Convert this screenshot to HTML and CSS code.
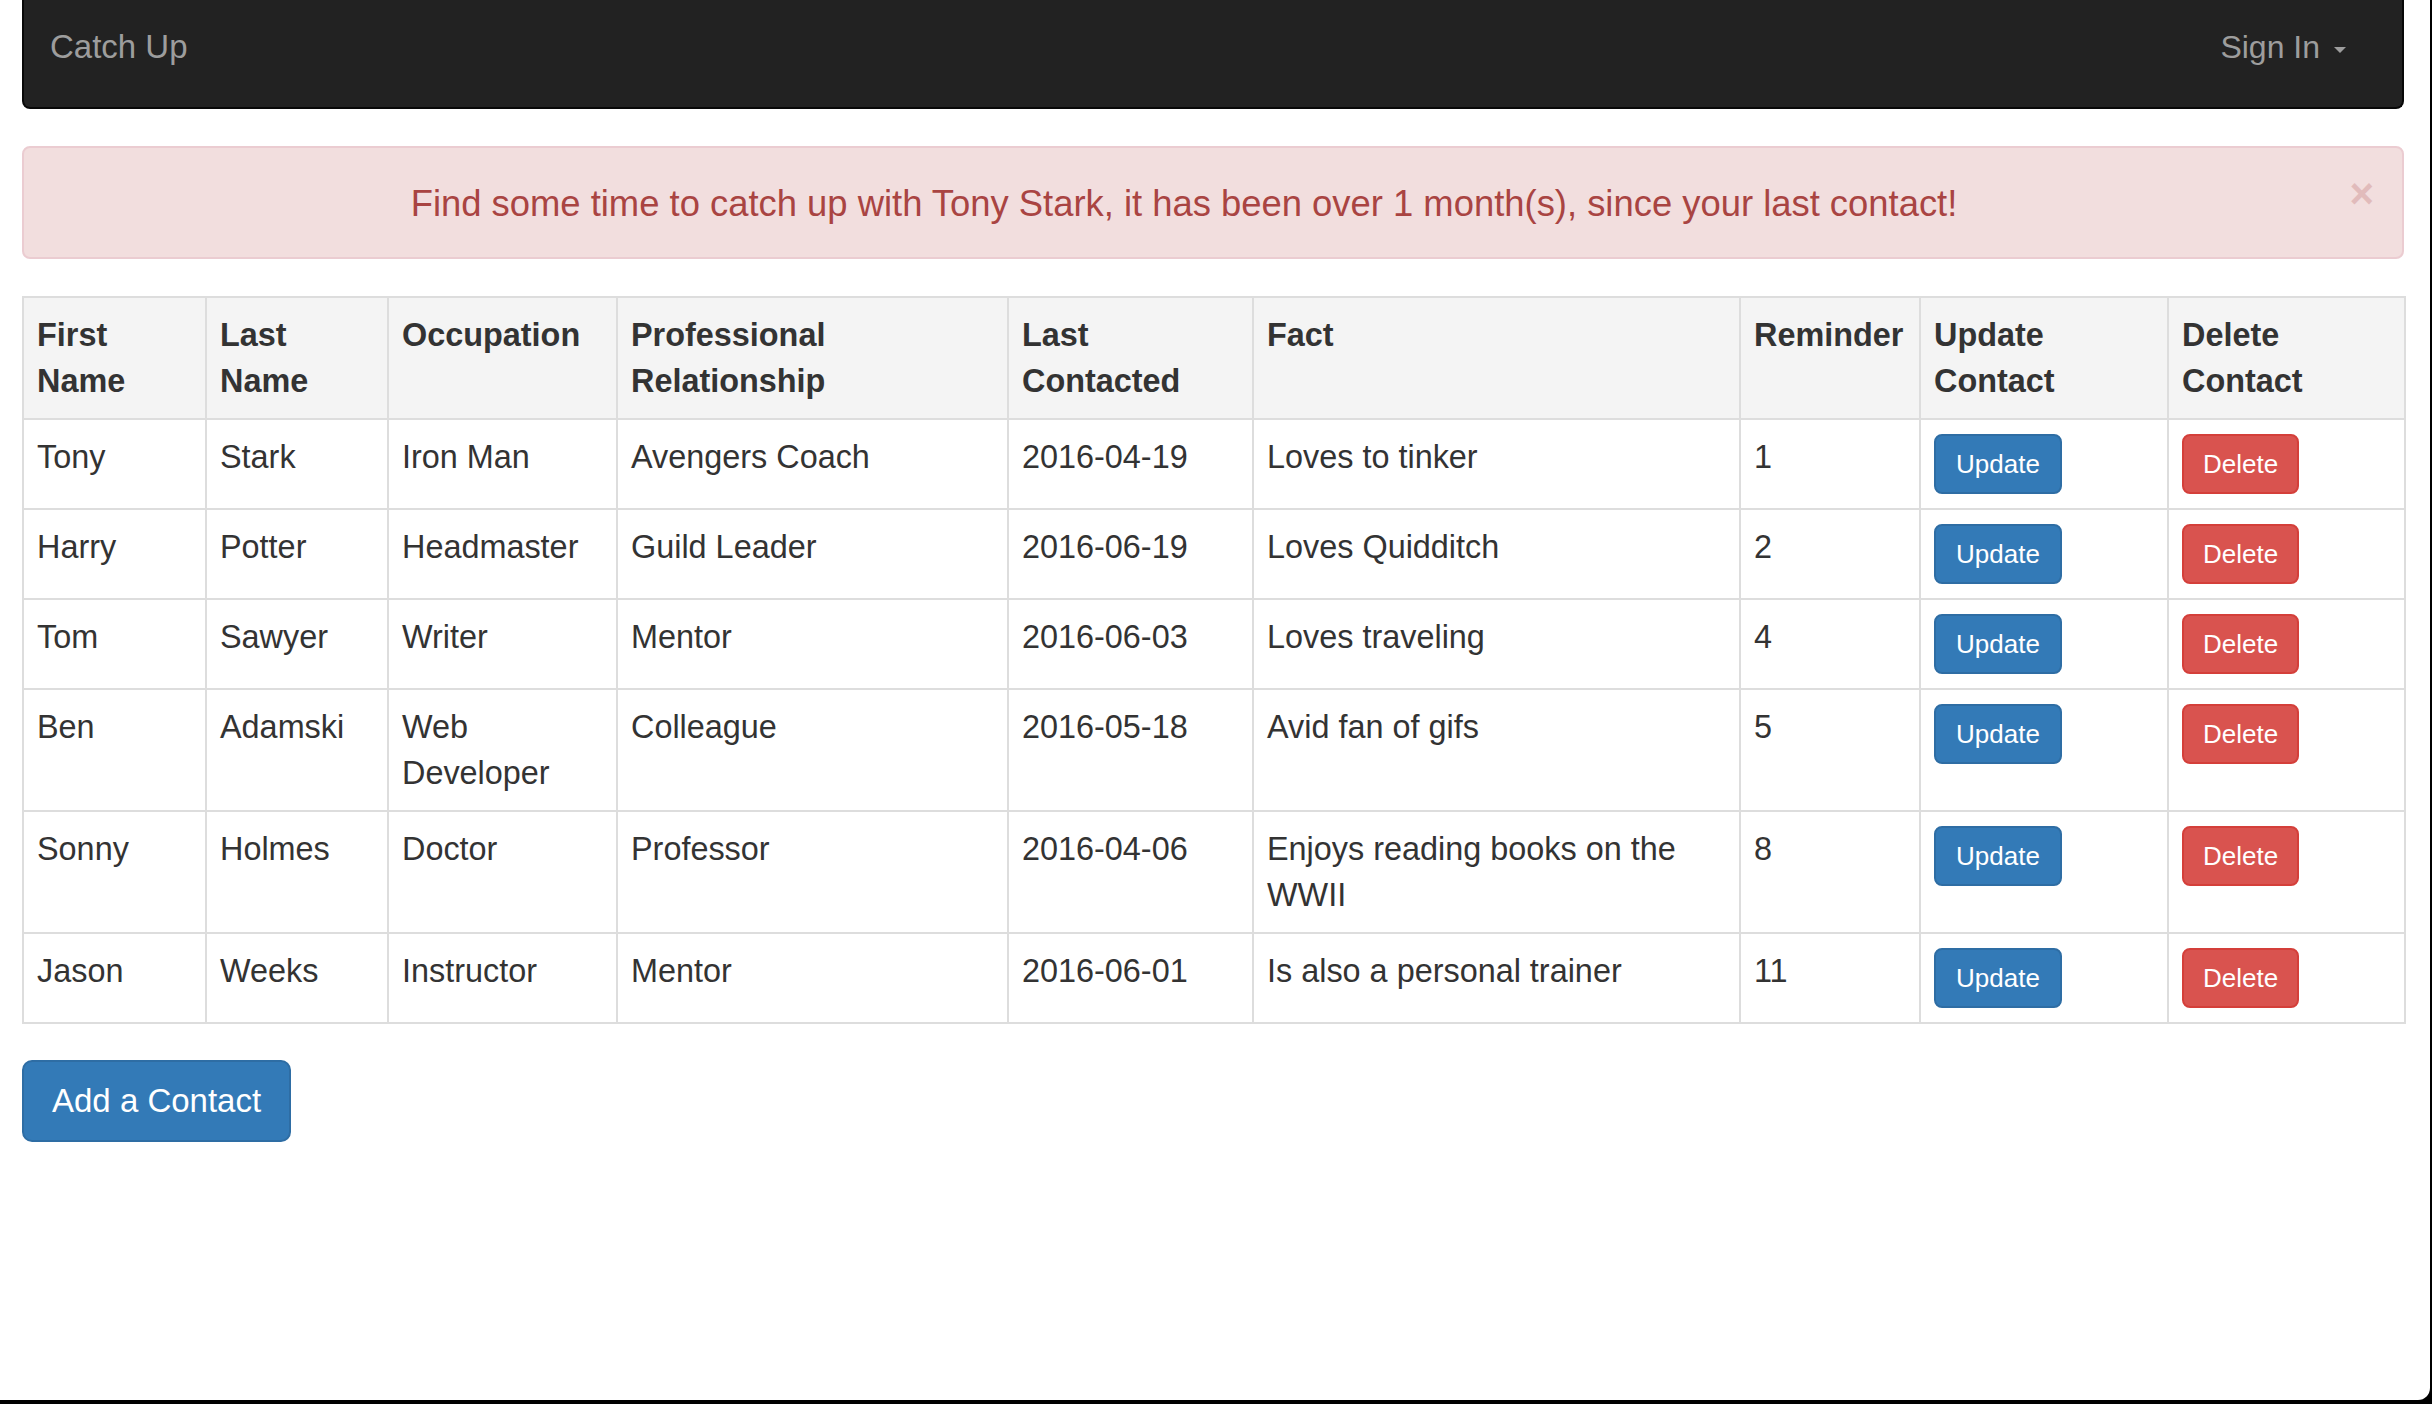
FILE: index.html
```html
<!DOCTYPE html>
<html lang="en">
<head>
<meta charset="utf-8">
<title>Catch Up</title>
<link rel="stylesheet" href="styles.css">
</head>
<body>
<div class="page">
  <nav class="navbar">
    <span class="brand">Catch Up</span>
    <span class="signin">Sign In<span class="caret"></span></span>
  </nav>

  <div class="alert">
    <p class="alert-text">Find some time to catch up with Tony Stark, it has been over 1 month(s), since your last contact!</p>
    <button class="close" type="button">&times;</button>
  </div>

  <table class="contacts">
    <colgroup>
      <col class="c1"><col class="c2"><col class="c3"><col class="c4"><col class="c5"><col class="c6"><col class="c7"><col class="c8"><col class="c9">
    </colgroup>
    <thead>
      <tr>
        <th>First<br>Name</th>
        <th>Last<br>Name</th>
        <th>Occupation</th>
        <th>Professional<br>Relationship</th>
        <th>Last<br>Contacted</th>
        <th>Fact</th>
        <th>Reminder</th>
        <th>Update<br>Contact</th>
        <th>Delete<br>Contact</th>
      </tr>
    </thead>
    <tbody>
      <tr>
        <td>Tony</td><td>Stark</td><td>Iron Man</td><td>Avengers Coach</td><td>2016-04-19</td><td>Loves to tinker</td><td>1</td>
        <td><button class="btn btn-primary">Update</button></td>
        <td><button class="btn btn-danger">Delete</button></td>
      </tr>
      <tr>
        <td>Harry</td><td>Potter</td><td>Headmaster</td><td>Guild Leader</td><td>2016-06-19</td><td>Loves Quidditch</td><td>2</td>
        <td><button class="btn btn-primary">Update</button></td>
        <td><button class="btn btn-danger">Delete</button></td>
      </tr>
      <tr>
        <td>Tom</td><td>Sawyer</td><td>Writer</td><td>Mentor</td><td>2016-06-03</td><td>Loves traveling</td><td>4</td>
        <td><button class="btn btn-primary">Update</button></td>
        <td><button class="btn btn-danger">Delete</button></td>
      </tr>
      <tr>
        <td>Ben</td><td>Adamski</td><td>Web<br>Developer</td><td>Colleague</td><td>2016-05-18</td><td>Avid fan of gifs</td><td>5</td>
        <td><button class="btn btn-primary">Update</button></td>
        <td><button class="btn btn-danger">Delete</button></td>
      </tr>
      <tr>
        <td>Sonny</td><td>Holmes</td><td>Doctor</td><td>Professor</td><td>2016-04-06</td><td>Enjoys reading books on the<br>WWII</td><td>8</td>
        <td><button class="btn btn-primary">Update</button></td>
        <td><button class="btn btn-danger">Delete</button></td>
      </tr>
      <tr>
        <td>Jason</td><td>Weeks</td><td>Instructor</td><td>Mentor</td><td>2016-06-01</td><td>Is also a personal trainer</td><td>11</td>
        <td><button class="btn btn-primary">Update</button></td>
        <td><button class="btn btn-danger">Delete</button></td>
      </tr>
    </tbody>
  </table>

  <button class="btn btn-primary btn-lg" type="button">Add a Contact</button>
</div>
</body>
</html>
```

FILE: styles.css
```css
* { box-sizing: border-box; }

html {
  background: #000;
  margin: 0;
  padding: 0;
}

body {
  margin: 0;
  width: 2430px;
  height: 1400px;
  background: #fff;
  border-bottom-right-radius: 12px;
  overflow: hidden;
  font-family: "Liberation Sans", Arial, sans-serif;
  color: #333;
}

.page {
  padding: 0 26px 0 22px;
}

/* Navbar */
.navbar {
  height: 109px;
  background: #222;
  border: 2px solid #080808;
  border-top: 0;
  border-radius: 0 0 8px 8px;
  display: flex;
  justify-content: space-between;
  align-items: flex-start;
  padding: 27px 56px 0 26px;
  color: #9d9d9d;
}

.brand {
  font-size: 33px;
  line-height: 40px;
}

.signin {
  font-size: 32px;
  line-height: 40px;
}

.caret {
  display: inline-block;
  vertical-align: middle;
  margin-left: 14px;
  width: 0;
  height: 0;
  border-top: 6px solid #9d9d9d;
  border-left: 6px solid transparent;
  border-right: 6px solid transparent;
}

/* Alert */
.alert {
  margin-top: 37px;
  display: flex;
  align-items: flex-start;
  background: #f2dede;
  border: 2px solid #ebccd1;
  border-radius: 8px;
  padding: 30px 28px 27px 30px;
  color: #a94442;
}

.alert-text {
  flex: 1;
  margin: 0 10px 0 0;
  font-size: 36.4px;
  line-height: 52px;
  text-align: center;
}

.close {
  width: 50px;
  padding: 0;
  margin: -5px 0 0 0;
  border: 0;
  background: none;
  font-family: "Liberation Sans", Arial, sans-serif;
  font-weight: bold;
  font-size: 42px;
  line-height: 41px;
  text-align: right;
  color: #a94442;
  opacity: 0.22;
}

/* Table */
.contacts {
  margin-top: 37px;
  width: 2382px;
  table-layout: fixed;
  border-collapse: collapse;
  border: 2px solid #ddd;
  font-size: 32.4px;
  line-height: 46px;
  color: #333;
}

.c1 { width: 183px; }
.c2 { width: 182px; }
.c3 { width: 229px; }
.c4 { width: 391px; }
.c5 { width: 245px; }
.c6 { width: 487px; }
.c7 { width: 180px; }
.c8 { width: 248px; }
.c9 { width: 237px; }

.contacts th,
.contacts td {
  padding: 14px 14px 14px 13px;
  border: 2px solid #ddd;
  vertical-align: top;
  text-align: left;
}

.contacts th {
  padding-right: 6px;
}

.contacts thead th {
  background: #f4f4f4;
  font-weight: bold;
}

/* Buttons */
.btn {
  display: inline-block;
  vertical-align: top;
  font-family: "Liberation Sans", Arial, sans-serif;
  color: #fff;
  border: 2px solid transparent;
  cursor: pointer;
  margin: 0;
}

.contacts .btn {
  font-size: 26px;
  line-height: 30px;
  padding: 13px 20px;
  border-radius: 8px;
}

.contacts .btn-danger {
  padding: 13px 19px;
}

.btn-primary {
  background: #337ab7;
  border-color: #2e6da4;
}

.btn-danger {
  background: #d9534f;
  border-color: #d43f3a;
}

.btn-lg {
  margin-top: 36px;
  font-size: 33px;
  line-height: 38px;
  padding: 20px 28px;
  border-radius: 10px;
}
```
